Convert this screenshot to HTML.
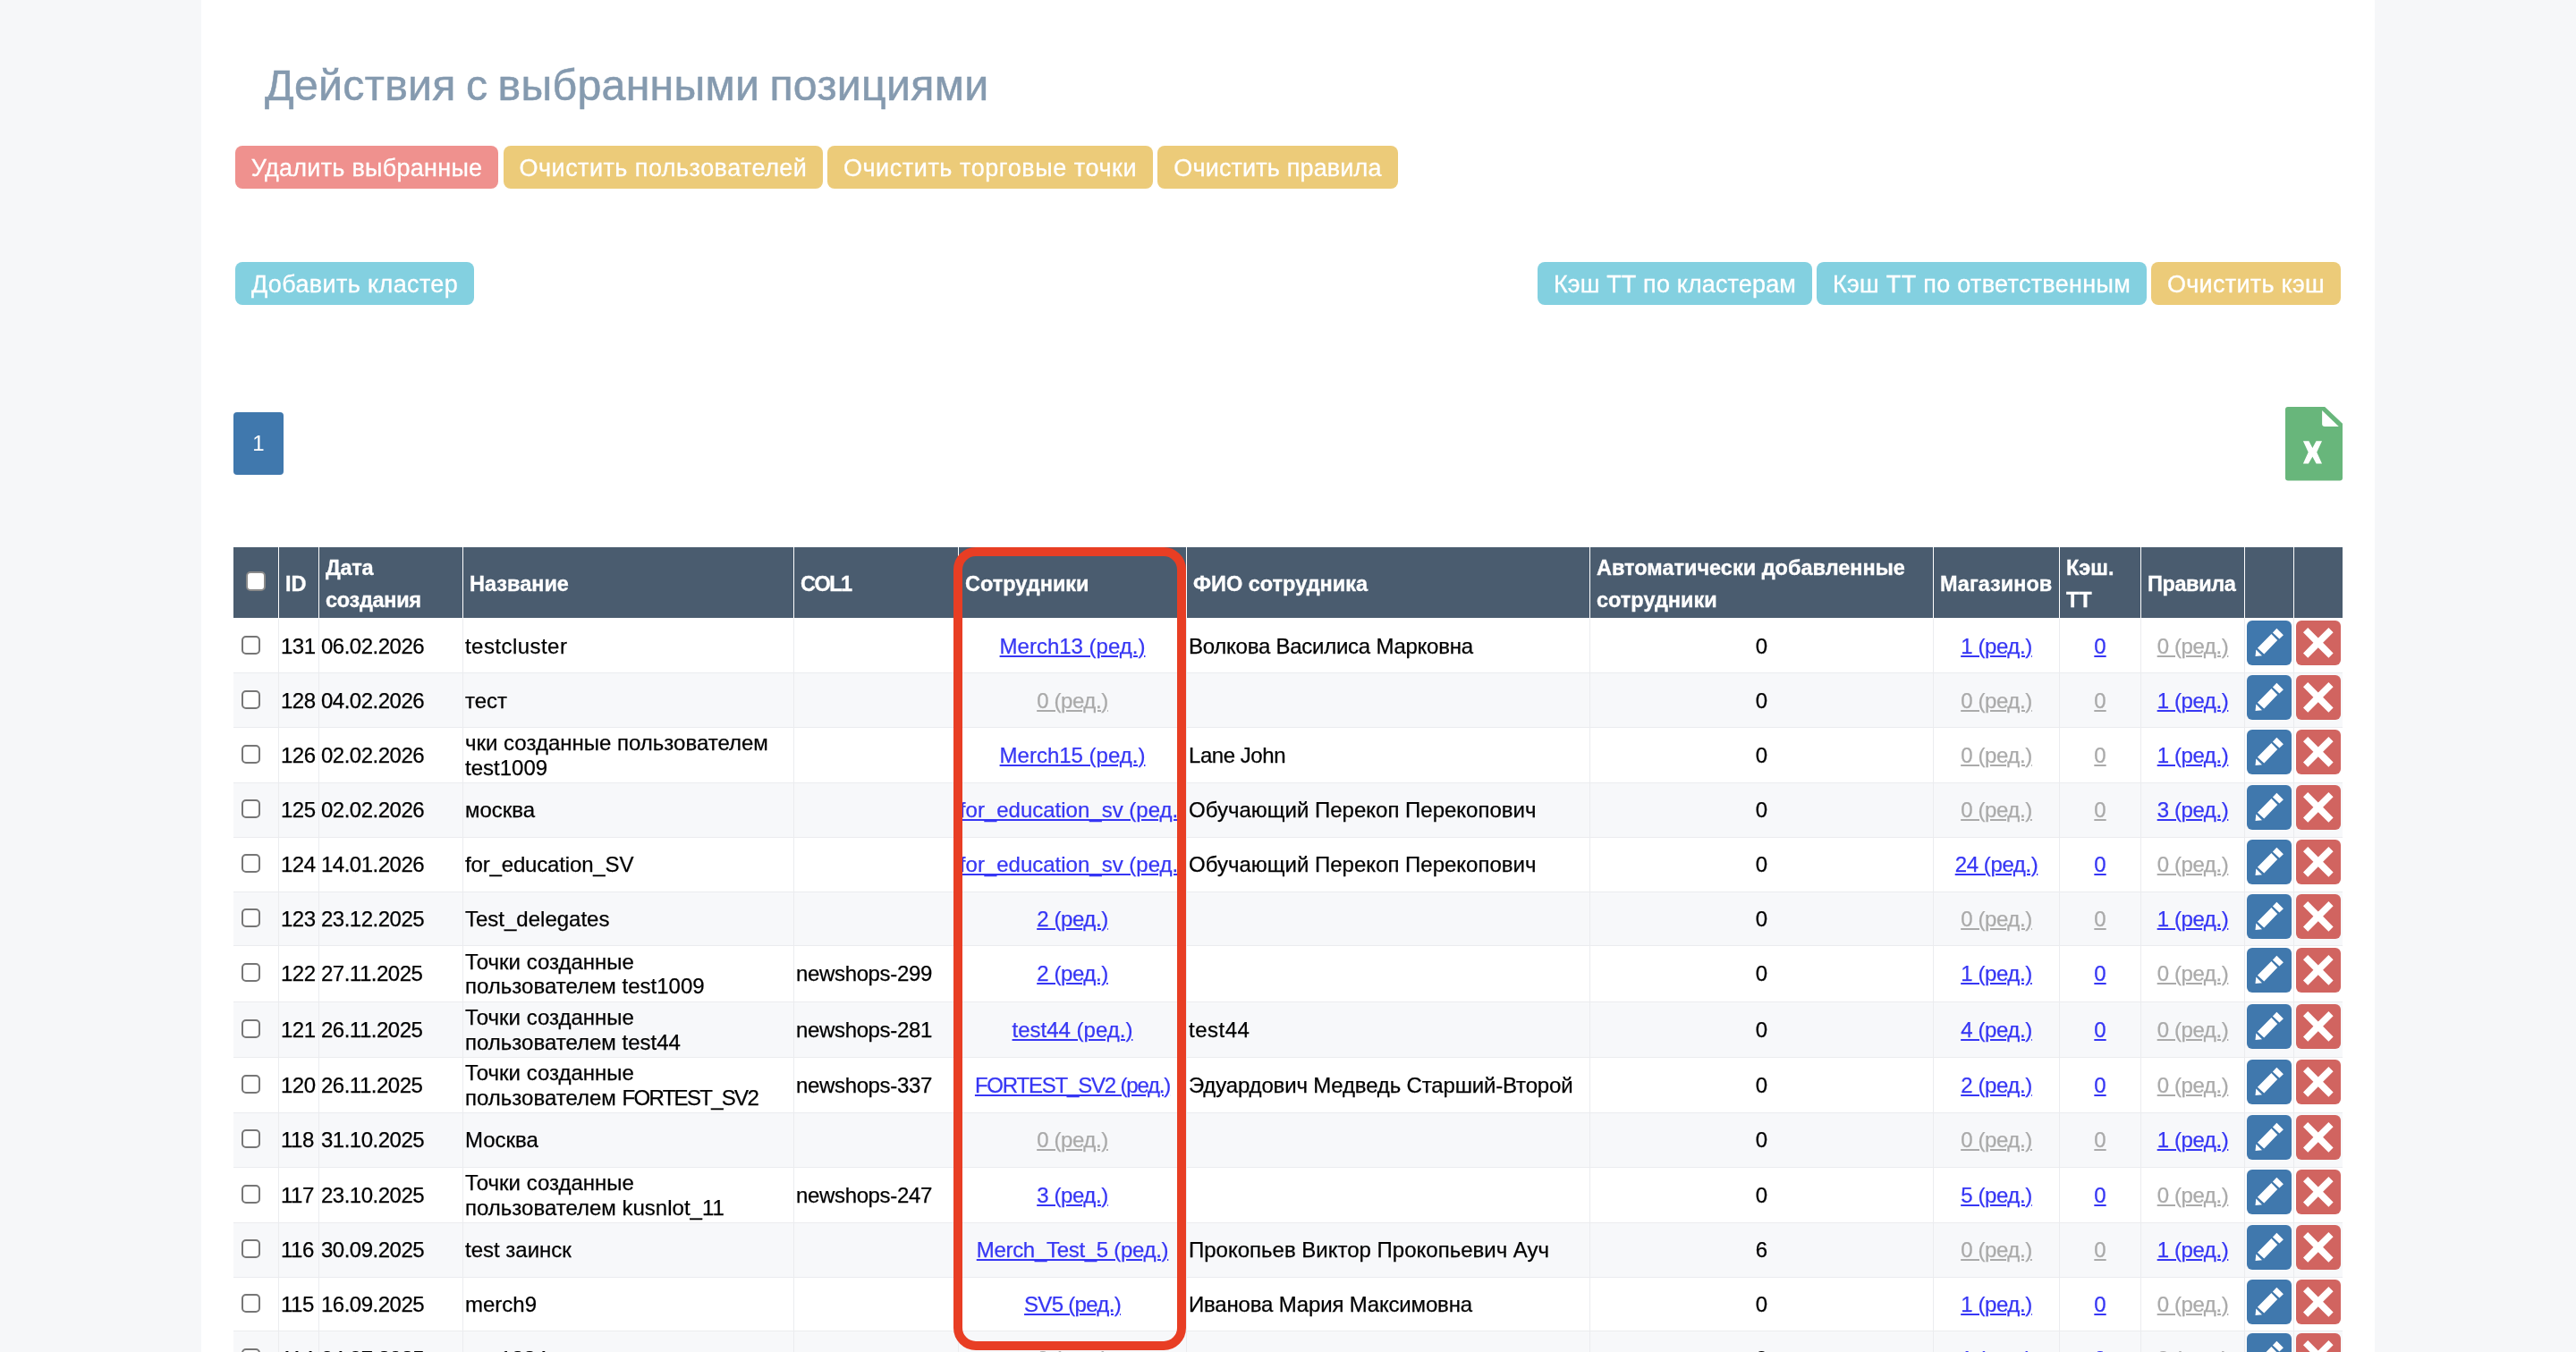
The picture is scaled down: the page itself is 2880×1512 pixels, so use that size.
<!DOCTYPE html>
<html lang="ru">
<head>
<meta charset="utf-8">
<title>Кластеры</title>
<style>
*{box-sizing:border-box}
html,body{margin:0;padding:0}
body{width:2880px;height:1512px;overflow:hidden;background:#f6f7f9;font-family:"Liberation Sans",sans-serif;color:#000;position:relative}
#wrap{position:absolute;left:0;top:0;width:2880px;height:1512px;will-change:transform}
#panel{position:absolute;left:225px;top:0;width:2430px;height:1512px;background:#fff}
h1{position:absolute;left:296px;top:59.5px;-webkit-text-stroke:0.5px #859aaf;margin:0;font-weight:400;font-size:48.3px;word-spacing:-2.5px;letter-spacing:0.27px;line-height:70px;color:#859aaf;white-space:nowrap}
.btn{position:absolute;height:48px;border-radius:8px;color:#fff;font-size:27px;letter-spacing:0.4px;line-height:50px;-webkit-text-stroke:0.3px #fff;text-align:center;white-space:nowrap}
.red{background:#ef918e}.yel{background:#eccb79}.cy{background:#83d0e0}
#pg{position:absolute;left:261px;top:461px;width:56px;height:70px;border-radius:4px;background:#4078ad;color:#fff;font-size:24px;line-height:70px;text-align:center}
#xl{position:absolute;left:2555px;top:455px;width:64px;height:82.5px}
table{position:absolute;left:261px;top:612px;width:2358px;table-layout:fixed;border-collapse:separate;border-spacing:0;font-size:24px}
th{background:#4a5c6f;color:#fff;font-weight:700;text-align:left;vertical-align:middle;height:79px;padding:2px 0 0 7px;line-height:36px;border-left:1px solid #fff;font-size:23.5px;-webkit-text-stroke:0.35px #fff}
th:first-child{border-left:0}
td{padding:var(--p,0px) 0 0 2px;-webkit-text-stroke:0.25px;vertical-align:middle;line-height:27.5px;border-left:1px solid #ebecef;border-top:1px solid #ebecef;white-space:nowrap;overflow:hidden}
td:first-child{border-left:0}
tr.e td{background:#f7f8fa}
td.c{text-align:center;padding:var(--p,0px) 0 0 0}
td.nm{white-space:normal}
tbody tr:first-child td{border-top-color:#fff}
td.n{letter-spacing:-0.5px}
td.c1{letter-spacing:-0.35px}
a.b{color:#3636f4;text-decoration:underline;text-decoration-thickness:2px;text-underline-offset:2px}
a.g{color:#aaaaaa;text-decoration:underline;text-decoration-thickness:2px;text-underline-offset:2px}
.chk{display:block;position:relative;top:-1.5px;width:21px;height:21px;margin-left:7px;border:2px solid #767676;border-radius:5px;background:#fff}
td.bt{vertical-align:top;padding:2px 0 0 2px}
.ib{display:block;width:50px;height:50px;border-radius:6px}
.ed{background:#4078ad}.dl{background:#d16460}
.ic{display:block;width:50px;height:50px;fill:#fff}
#hl{position:absolute;left:1066px;top:612px;width:260px;height:898px;border:10px solid #e83e24;border-radius:25px}
#hchk{display:block;position:relative;top:-3px;width:22px;height:22px;margin-left:7px;border:2px solid #8a8a8a;border-radius:5px;background:#fff}
</style>
</head>
<body>
<div id="panel"></div>
<div id="wrap">
<h1>Действия с выбранными позициями</h1>
<div class="btn red" style="left:263px;top:163px;width:294px;letter-spacing:0.275px">Удалить выбранные</div>
<div class="btn yel" style="left:563px;top:163px;width:357px;letter-spacing:0.47px">Очистить пользователей</div>
<div class="btn yel" style="left:925px;top:163px;width:364px;letter-spacing:0.57px">Очистить торговые точки</div>
<div class="btn yel" style="left:1294px;top:163px;width:269px;letter-spacing:0.15px">Очистить правила</div>
<div class="btn cy" style="left:263px;top:293px;width:267px;letter-spacing:0.37px">Добавить кластер</div>
<div class="btn cy" style="left:1719px;top:293px;width:307px;letter-spacing:0.14px">Кэш ТТ по кластерам</div>
<div class="btn cy" style="left:2031px;top:293px;width:369px;letter-spacing:0.31px">Кэш ТТ по ответственным</div>
<div class="btn yel" style="left:2405px;top:293px;width:212px;letter-spacing:0.29px">Очистить кэш</div>
<div id="pg">1</div>
<svg id="xl" viewBox="0 0 64 82.5"><path d="M3 0H44.2L64 18.7V79.5Q64 82.5 61 82.5H3Q0 82.5 0 79.5V3Q0 0 3 0Z" fill="#68b67b"/><path d="M41.1 3.9L59.8 22.1H44.1Q41.1 22.1 41.1 19.1Z" fill="#fff"/><path d="M19.9 38.3H26.4L30.4 46.1L34.5 38.3H41L35.2 50.7L41 63.6H34.6L30.4 55.7L25.9 63.6H19.9L25.7 50.7Z" fill="#fff"/></svg>
<table>
<colgroup><col style="width:50px"><col style="width:45px"><col style="width:161px"><col style="width:370px"><col style="width:184px"><col style="width:255px"><col style="width:451px"><col style="width:384px"><col style="width:141px"><col style="width:91px"><col style="width:116px"><col style="width:55px"><col style="width:55px"></colgroup>
<thead><tr>
<th><span id="hchk"></span></th><th>ID</th><th style="letter-spacing:-0.3px">Дата создания</th><th>Название</th><th style="letter-spacing:-1.5px">COL1</th><th>Сотрудники</th><th>ФИО сотрудника</th><th>Автоматически добавленные сотрудники</th><th>Магазинов</th><th>Кэш. ТТ</th><th style="letter-spacing:-0.4px">Правила</th><th></th><th></th>
</tr></thead>
<tbody>
<tr class="o" style="height:61px;--p:1px">
<td class="cb"><span class="chk"></span></td>
<td class="n">131</td><td class="n">06.02.2026</td>
<td class="nm" style="letter-spacing:0.45px">testcluster</td>
<td class="c1"></td>
<td class="c st"><a class="b">Merch13 (ред.)</a></td>
<td style="letter-spacing:-0.25px">Волкова Василиса Марковна</td>
<td class="c">0</td>
<td class="c"><a class="b" style="letter-spacing:-0.4px">1 (ред.)</a></td><td class="c"><a class="b">0</a></td><td class="c"><a class="g" style="letter-spacing:-0.4px">0 (ред.)</a></td>
<td class="bt"><span class="ib ed"><svg class="ic" viewBox="0 0 50 50"><path d="M33.4 8.7L40.9 16.3L36.4 20.6L28.9 13.5ZM27.4 15.1L34.2 22L19.3 37.4L11.9 30.7ZM10.3 32.4L17 39.3L9.5 39.9Z"/></svg></span></td><td class="bt"><span class="ib dl"><svg class="ic" viewBox="0 0 50 50"><path d="M13.25 8L24.75 19.6L36.4 8L41.6 13.3L30.1 24.85L41.6 36.5L36.4 41.8L24.75 30.3L13.25 41.8L8 36.5L19.4 24.85L8 13.3Z"/></svg></span></td>
</tr>
<tr class="e" style="height:61px;--p:1px">
<td class="cb"><span class="chk"></span></td>
<td class="n">128</td><td class="n">04.02.2026</td>
<td class="nm">тест</td>
<td class="c1"></td>
<td class="c st"><a class="g" style="letter-spacing:-0.4px">0 (ред.)</a></td>
<td></td>
<td class="c">0</td>
<td class="c"><a class="g" style="letter-spacing:-0.4px">0 (ред.)</a></td><td class="c"><a class="g">0</a></td><td class="c"><a class="b" style="letter-spacing:-0.4px">1 (ред.)</a></td>
<td class="bt"><span class="ib ed"><svg class="ic" viewBox="0 0 50 50"><path d="M33.4 8.7L40.9 16.3L36.4 20.6L28.9 13.5ZM27.4 15.1L34.2 22L19.3 37.4L11.9 30.7ZM10.3 32.4L17 39.3L9.5 39.9Z"/></svg></span></td><td class="bt"><span class="ib dl"><svg class="ic" viewBox="0 0 50 50"><path d="M13.25 8L24.75 19.6L36.4 8L41.6 13.3L30.1 24.85L41.6 36.5L36.4 41.8L24.75 30.3L13.25 41.8L8 36.5L19.4 24.85L8 13.3Z"/></svg></span></td>
</tr>
<tr class="o" style="height:62px">
<td class="cb"><span class="chk"></span></td>
<td class="n">126</td><td class="n">02.02.2026</td>
<td class="nm">чки созданные пользователем<br>test1009</td>
<td class="c1"></td>
<td class="c st"><a class="b">Merch15 (ред.)</a></td>
<td style="letter-spacing:-0.45px">Lane John</td>
<td class="c">0</td>
<td class="c"><a class="g" style="letter-spacing:-0.4px">0 (ред.)</a></td><td class="c"><a class="g">0</a></td><td class="c"><a class="b" style="letter-spacing:-0.4px">1 (ред.)</a></td>
<td class="bt"><span class="ib ed"><svg class="ic" viewBox="0 0 50 50"><path d="M33.4 8.7L40.9 16.3L36.4 20.6L28.9 13.5ZM27.4 15.1L34.2 22L19.3 37.4L11.9 30.7ZM10.3 32.4L17 39.3L9.5 39.9Z"/></svg></span></td><td class="bt"><span class="ib dl"><svg class="ic" viewBox="0 0 50 50"><path d="M13.25 8L24.75 19.6L36.4 8L41.6 13.3L30.1 24.85L41.6 36.5L36.4 41.8L24.75 30.3L13.25 41.8L8 36.5L19.4 24.85L8 13.3Z"/></svg></span></td>
</tr>
<tr class="e" style="height:61px">
<td class="cb"><span class="chk"></span></td>
<td class="n">125</td><td class="n">02.02.2026</td>
<td class="nm">москва</td>
<td class="c1"></td>
<td class="c st"><a class="b">for_education_sv (ред.)</a></td>
<td>Обучающий Перекоп Перекопович</td>
<td class="c">0</td>
<td class="c"><a class="g" style="letter-spacing:-0.4px">0 (ред.)</a></td><td class="c"><a class="g">0</a></td><td class="c"><a class="b" style="letter-spacing:-0.4px">3 (ред.)</a></td>
<td class="bt"><span class="ib ed"><svg class="ic" viewBox="0 0 50 50"><path d="M33.4 8.7L40.9 16.3L36.4 20.6L28.9 13.5ZM27.4 15.1L34.2 22L19.3 37.4L11.9 30.7ZM10.3 32.4L17 39.3L9.5 39.9Z"/></svg></span></td><td class="bt"><span class="ib dl"><svg class="ic" viewBox="0 0 50 50"><path d="M13.25 8L24.75 19.6L36.4 8L41.6 13.3L30.1 24.85L41.6 36.5L36.4 41.8L24.75 30.3L13.25 41.8L8 36.5L19.4 24.85L8 13.3Z"/></svg></span></td>
</tr>
<tr class="o" style="height:61px">
<td class="cb"><span class="chk"></span></td>
<td class="n">124</td><td class="n">14.01.2026</td>
<td class="nm" style="letter-spacing:-0.16px">for_education_SV</td>
<td class="c1"></td>
<td class="c st"><a class="b">for_education_sv (ред.)</a></td>
<td>Обучающий Перекоп Перекопович</td>
<td class="c">0</td>
<td class="c"><a class="b" style="letter-spacing:-0.4px">24 (ред.)</a></td><td class="c"><a class="b">0</a></td><td class="c"><a class="g" style="letter-spacing:-0.4px">0 (ред.)</a></td>
<td class="bt"><span class="ib ed"><svg class="ic" viewBox="0 0 50 50"><path d="M33.4 8.7L40.9 16.3L36.4 20.6L28.9 13.5ZM27.4 15.1L34.2 22L19.3 37.4L11.9 30.7ZM10.3 32.4L17 39.3L9.5 39.9Z"/></svg></span></td><td class="bt"><span class="ib dl"><svg class="ic" viewBox="0 0 50 50"><path d="M13.25 8L24.75 19.6L36.4 8L41.6 13.3L30.1 24.85L41.6 36.5L36.4 41.8L24.75 30.3L13.25 41.8L8 36.5L19.4 24.85L8 13.3Z"/></svg></span></td>
</tr>
<tr class="e" style="height:60px">
<td class="cb"><span class="chk"></span></td>
<td class="n">123</td><td class="n">23.12.2025</td>
<td class="nm">Test_delegates</td>
<td class="c1"></td>
<td class="c st"><a class="b" style="letter-spacing:-0.4px">2 (ред.)</a></td>
<td></td>
<td class="c">0</td>
<td class="c"><a class="g" style="letter-spacing:-0.4px">0 (ред.)</a></td><td class="c"><a class="g">0</a></td><td class="c"><a class="b" style="letter-spacing:-0.4px">1 (ред.)</a></td>
<td class="bt"><span class="ib ed"><svg class="ic" viewBox="0 0 50 50"><path d="M33.4 8.7L40.9 16.3L36.4 20.6L28.9 13.5ZM27.4 15.1L34.2 22L19.3 37.4L11.9 30.7ZM10.3 32.4L17 39.3L9.5 39.9Z"/></svg></span></td><td class="bt"><span class="ib dl"><svg class="ic" viewBox="0 0 50 50"><path d="M13.25 8L24.75 19.6L36.4 8L41.6 13.3L30.1 24.85L41.6 36.5L36.4 41.8L24.75 30.3L13.25 41.8L8 36.5L19.4 24.85L8 13.3Z"/></svg></span></td>
</tr>
<tr class="o" style="height:63px">
<td class="cb"><span class="chk"></span></td>
<td class="n">122</td><td class="n">27.11.2025</td>
<td class="nm">Точки созданные<br>пользователем test1009</td>
<td class="c1">newshops-299</td>
<td class="c st"><a class="b" style="letter-spacing:-0.4px">2 (ред.)</a></td>
<td></td>
<td class="c">0</td>
<td class="c"><a class="b" style="letter-spacing:-0.4px">1 (ред.)</a></td><td class="c"><a class="b">0</a></td><td class="c"><a class="g" style="letter-spacing:-0.4px">0 (ред.)</a></td>
<td class="bt"><span class="ib ed"><svg class="ic" viewBox="0 0 50 50"><path d="M33.4 8.7L40.9 16.3L36.4 20.6L28.9 13.5ZM27.4 15.1L34.2 22L19.3 37.4L11.9 30.7ZM10.3 32.4L17 39.3L9.5 39.9Z"/></svg></span></td><td class="bt"><span class="ib dl"><svg class="ic" viewBox="0 0 50 50"><path d="M13.25 8L24.75 19.6L36.4 8L41.6 13.3L30.1 24.85L41.6 36.5L36.4 41.8L24.75 30.3L13.25 41.8L8 36.5L19.4 24.85L8 13.3Z"/></svg></span></td>
</tr>
<tr class="e" style="height:62px">
<td class="cb"><span class="chk"></span></td>
<td class="n">121</td><td class="n">26.11.2025</td>
<td class="nm">Точки созданные<br>пользователем test44</td>
<td class="c1">newshops-281</td>
<td class="c st"><a class="b">test44 (ред.)</a></td>
<td style="letter-spacing:0.5px">test44</td>
<td class="c">0</td>
<td class="c"><a class="b" style="letter-spacing:-0.4px">4 (ред.)</a></td><td class="c"><a class="b">0</a></td><td class="c"><a class="g" style="letter-spacing:-0.4px">0 (ред.)</a></td>
<td class="bt"><span class="ib ed"><svg class="ic" viewBox="0 0 50 50"><path d="M33.4 8.7L40.9 16.3L36.4 20.6L28.9 13.5ZM27.4 15.1L34.2 22L19.3 37.4L11.9 30.7ZM10.3 32.4L17 39.3L9.5 39.9Z"/></svg></span></td><td class="bt"><span class="ib dl"><svg class="ic" viewBox="0 0 50 50"><path d="M13.25 8L24.75 19.6L36.4 8L41.6 13.3L30.1 24.85L41.6 36.5L36.4 41.8L24.75 30.3L13.25 41.8L8 36.5L19.4 24.85L8 13.3Z"/></svg></span></td>
</tr>
<tr class="o" style="height:62px">
<td class="cb"><span class="chk"></span></td>
<td class="n">120</td><td class="n">26.11.2025</td>
<td class="nm">Точки созданные<br>пользователем <span style="letter-spacing:-1.7px">FORTEST_SV2</span></td>
<td class="c1">newshops-337</td>
<td class="c st"><a class="b" style="letter-spacing:-1.2px">FORTEST_SV2 (ред.)</a></td>
<td style="letter-spacing:-0.16px">Эдуардович Медведь Старший-Второй</td>
<td class="c">0</td>
<td class="c"><a class="b" style="letter-spacing:-0.4px">2 (ред.)</a></td><td class="c"><a class="b">0</a></td><td class="c"><a class="g" style="letter-spacing:-0.4px">0 (ред.)</a></td>
<td class="bt"><span class="ib ed"><svg class="ic" viewBox="0 0 50 50"><path d="M33.4 8.7L40.9 16.3L36.4 20.6L28.9 13.5ZM27.4 15.1L34.2 22L19.3 37.4L11.9 30.7ZM10.3 32.4L17 39.3L9.5 39.9Z"/></svg></span></td><td class="bt"><span class="ib dl"><svg class="ic" viewBox="0 0 50 50"><path d="M13.25 8L24.75 19.6L36.4 8L41.6 13.3L30.1 24.85L41.6 36.5L36.4 41.8L24.75 30.3L13.25 41.8L8 36.5L19.4 24.85L8 13.3Z"/></svg></span></td>
</tr>
<tr class="e" style="height:61px">
<td class="cb"><span class="chk"></span></td>
<td class="n">118</td><td class="n">31.10.2025</td>
<td class="nm">Москва</td>
<td class="c1"></td>
<td class="c st"><a class="g" style="letter-spacing:-0.4px">0 (ред.)</a></td>
<td></td>
<td class="c">0</td>
<td class="c"><a class="g" style="letter-spacing:-0.4px">0 (ред.)</a></td><td class="c"><a class="g">0</a></td><td class="c"><a class="b" style="letter-spacing:-0.4px">1 (ред.)</a></td>
<td class="bt"><span class="ib ed"><svg class="ic" viewBox="0 0 50 50"><path d="M33.4 8.7L40.9 16.3L36.4 20.6L28.9 13.5ZM27.4 15.1L34.2 22L19.3 37.4L11.9 30.7ZM10.3 32.4L17 39.3L9.5 39.9Z"/></svg></span></td><td class="bt"><span class="ib dl"><svg class="ic" viewBox="0 0 50 50"><path d="M13.25 8L24.75 19.6L36.4 8L41.6 13.3L30.1 24.85L41.6 36.5L36.4 41.8L24.75 30.3L13.25 41.8L8 36.5L19.4 24.85L8 13.3Z"/></svg></span></td>
</tr>
<tr class="o" style="height:62px">
<td class="cb"><span class="chk"></span></td>
<td class="n">117</td><td class="n">23.10.2025</td>
<td class="nm">Точки созданные<br>пользователем kusnlot_11</td>
<td class="c1">newshops-247</td>
<td class="c st"><a class="b" style="letter-spacing:-0.4px">3 (ред.)</a></td>
<td></td>
<td class="c">0</td>
<td class="c"><a class="b" style="letter-spacing:-0.4px">5 (ред.)</a></td><td class="c"><a class="b">0</a></td><td class="c"><a class="g" style="letter-spacing:-0.4px">0 (ред.)</a></td>
<td class="bt"><span class="ib ed"><svg class="ic" viewBox="0 0 50 50"><path d="M33.4 8.7L40.9 16.3L36.4 20.6L28.9 13.5ZM27.4 15.1L34.2 22L19.3 37.4L11.9 30.7ZM10.3 32.4L17 39.3L9.5 39.9Z"/></svg></span></td><td class="bt"><span class="ib dl"><svg class="ic" viewBox="0 0 50 50"><path d="M13.25 8L24.75 19.6L36.4 8L41.6 13.3L30.1 24.85L41.6 36.5L36.4 41.8L24.75 30.3L13.25 41.8L8 36.5L19.4 24.85L8 13.3Z"/></svg></span></td>
</tr>
<tr class="e" style="height:61px">
<td class="cb"><span class="chk"></span></td>
<td class="n">116</td><td class="n">30.09.2025</td>
<td class="nm">test заинск</td>
<td class="c1"></td>
<td class="c st"><a class="b" style="letter-spacing:-0.3px">Merch_Test_5 (ред.)</a></td>
<td>Прокопьев Виктор Прокопьевич Ауч</td>
<td class="c">6</td>
<td class="c"><a class="g" style="letter-spacing:-0.4px">0 (ред.)</a></td><td class="c"><a class="g">0</a></td><td class="c"><a class="b" style="letter-spacing:-0.4px">1 (ред.)</a></td>
<td class="bt"><span class="ib ed"><svg class="ic" viewBox="0 0 50 50"><path d="M33.4 8.7L40.9 16.3L36.4 20.6L28.9 13.5ZM27.4 15.1L34.2 22L19.3 37.4L11.9 30.7ZM10.3 32.4L17 39.3L9.5 39.9Z"/></svg></span></td><td class="bt"><span class="ib dl"><svg class="ic" viewBox="0 0 50 50"><path d="M13.25 8L24.75 19.6L36.4 8L41.6 13.3L30.1 24.85L41.6 36.5L36.4 41.8L24.75 30.3L13.25 41.8L8 36.5L19.4 24.85L8 13.3Z"/></svg></span></td>
</tr>
<tr class="o" style="height:60px">
<td class="cb"><span class="chk"></span></td>
<td class="n">115</td><td class="n">16.09.2025</td>
<td class="nm">merch9</td>
<td class="c1"></td>
<td class="c st"><a class="b" style="letter-spacing:-0.7px">SV5 (ред.)</a></td>
<td style="letter-spacing:-0.18px">Иванова Мария Максимовна</td>
<td class="c">0</td>
<td class="c"><a class="b" style="letter-spacing:-0.4px">1 (ред.)</a></td><td class="c"><a class="b">0</a></td><td class="c"><a class="g" style="letter-spacing:-0.4px">0 (ред.)</a></td>
<td class="bt"><span class="ib ed"><svg class="ic" viewBox="0 0 50 50"><path d="M33.4 8.7L40.9 16.3L36.4 20.6L28.9 13.5ZM27.4 15.1L34.2 22L19.3 37.4L11.9 30.7ZM10.3 32.4L17 39.3L9.5 39.9Z"/></svg></span></td><td class="bt"><span class="ib dl"><svg class="ic" viewBox="0 0 50 50"><path d="M13.25 8L24.75 19.6L36.4 8L41.6 13.3L30.1 24.85L41.6 36.5L36.4 41.8L24.75 30.3L13.25 41.8L8 36.5L19.4 24.85L8 13.3Z"/></svg></span></td>
</tr>
<tr class="e" style="height:61px;--p:2px">
<td class="cb"><span class="chk"></span></td>
<td class="n">114</td><td class="n">04.07.2025</td>
<td class="nm">test1234</td>
<td class="c1"></td>
<td class="c st"><a class="g" style="letter-spacing:-0.4px">0 (ред.)</a></td>
<td></td>
<td class="c">0</td>
<td class="c"><a class="b" style="letter-spacing:-0.4px">1 (ред.)</a></td><td class="c"><a class="b">0</a></td><td class="c"><a class="g" style="letter-spacing:-0.4px">0 (ред.)</a></td>
<td class="bt"><span class="ib ed"><svg class="ic" viewBox="0 0 50 50"><path d="M33.4 8.7L40.9 16.3L36.4 20.6L28.9 13.5ZM27.4 15.1L34.2 22L19.3 37.4L11.9 30.7ZM10.3 32.4L17 39.3L9.5 39.9Z"/></svg></span></td><td class="bt"><span class="ib dl"><svg class="ic" viewBox="0 0 50 50"><path d="M13.25 8L24.75 19.6L36.4 8L41.6 13.3L30.1 24.85L41.6 36.5L36.4 41.8L24.75 30.3L13.25 41.8L8 36.5L19.4 24.85L8 13.3Z"/></svg></span></td>
</tr>
</tbody>
</table>
<div id="hl"></div>
</div>
</body>
</html>
